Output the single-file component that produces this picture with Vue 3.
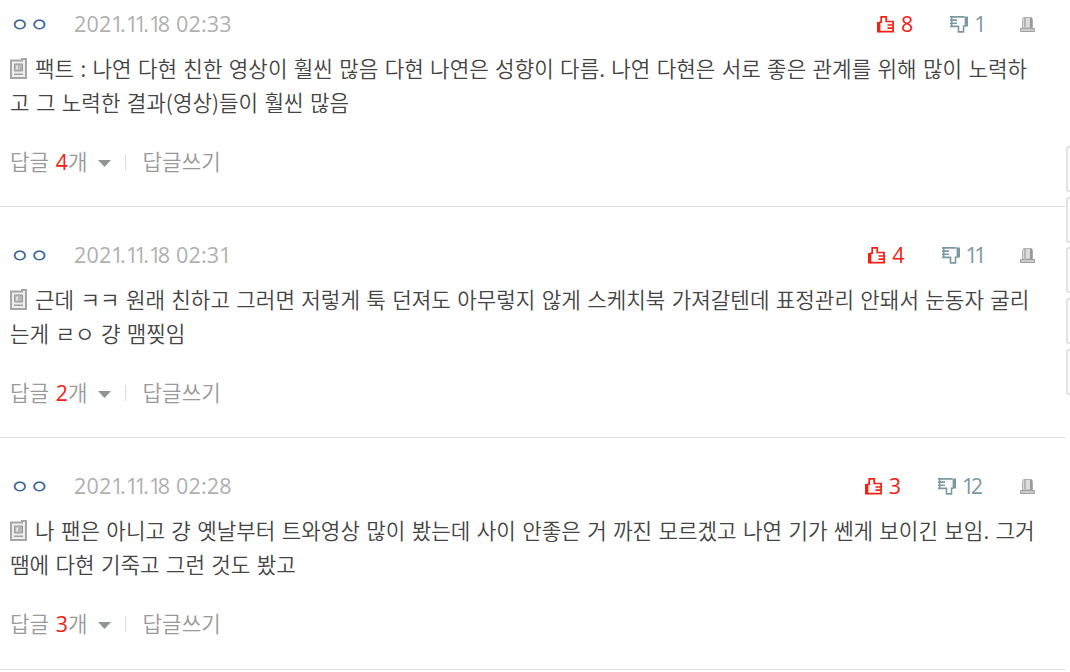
<script setup>
const comments = [
  {
    name: 'ㅇㅇ',
    date: '2021.11.18',
    time: '02:33',
    up: 8,
    down: 1,
    replies: 4,
    lines: [
      '팩트 : 나연 다현 친한 영상이 훨씬 많음 다현 나연은 성향이 다름. 나연 다현은 서로 좋은 관계를 위해 많이 노력하',
      '고 그 노력한 결과(영상)들이 훨씬 많음'
    ]
  },
  {
    name: 'ㅇㅇ',
    date: '2021.11.18',
    time: '02:31',
    up: 4,
    down: 11,
    replies: 2,
    lines: [
      '근데 ㅋㅋ 원래 친하고 그러면 저렇게 툭 던져도 아무렇지 않게 스케치북 가져갈텐데 표정관리 안돼서 눈동자 굴리',
      '는게 ㄹㅇ 걍 맴찢임'
    ]
  },
  {
    name: 'ㅇㅇ',
    date: '2021.11.18',
    time: '02:28',
    up: 3,
    down: 12,
    replies: 3,
    lines: [
      '나 팬은 아니고 걍 옛날부터 트와영상 많이 봤는데 사이 안좋은 거 까진 모르겠고 나연 기가 쎈게 보이긴 보임. 그거',
      '땜에 다현 기죽고 그런 것도 봤고'
    ]
  }
]

// the digit 1 is set narrower than the others
const chars = (value) => String(value).split('')
</script>

<template>
  <div class="page">
    <ul class="comment-list">
      <li v-for="(item, index) in comments" :key="index" class="comment">
        <div class="comment-head">
          <span class="name">{{ item.name }}</span>
          <span class="date"><span v-for="(c, i) in chars(item.date + ' ' + item.time)" :key="i" :class="{ one: c === '1' }">{{ c }}</span></span>
          <div class="actions">
            <button class="vote up">
              <svg width="17" height="17" viewBox="0 0 17 17">
                <path fill="currentColor" d="M0 6h3.4v10.5H0z" />
                <path fill="none" stroke="currentColor" stroke-width="1.7" d="M2.5 6.2h1.7V.9h5v4.6h6.9v10.2H2.5M10.5 9H16M10.5 12.2H16" />
              </svg>
              <span class="count"><span v-for="(c, i) in chars(item.up)" :key="i" :class="{ one: c === '1' }">{{ c }}</span></span>
            </button>
            <button class="vote down">
              <svg width="18" height="17" viewBox="0 0 18 17">
                <path fill="currentColor" d="M14.6.5H18V10.5h-3.4z" />
                <path fill="none" stroke="currentColor" stroke-width="1.6" d="M14.5.9H1.7v9.5h6.8v5.5h5V10.3h2M0 .9h2M0 4.1h7M0 7.2h7M0 10.4h3" />
              </svg>
              <span class="count"><span v-for="(c, i) in chars(item.down)" :key="i" :class="{ one: c === '1' }">{{ c }}</span></span>
            </button>
            <button class="report">
              <svg width="15" height="15" viewBox="0 0 15 15">
                <path fill="#dcdcdc" stroke="#b0b0b0" d="M2.5 11V2.5l1-2h8l1 2V11z" />
                <path fill="#b4b4b4" d="M4 1h2v9H4z" />
                <path fill="#999" d="M10 1h2v10h-2z" />
                <path fill="#ccc" stroke="#a0a0a0" d="M.5 11.5h14v3H.5z" />
              </svg>
            </button>
          </div>
        </div>
        <p class="content">
          <span class="line">
            <svg class="mobile" width="17" height="21" viewBox="0 0 17 21">
              <path fill="#eee" stroke="#a6a6a6" stroke-width="2" d="M1 2.5h11V1h4v19H1z" />
              <path fill="#b8b8b8" stroke="#999" d="M4.5 6h8v7h-8z" />
              <path fill="#e2e2e2" d="M6 7.5h2v4H6z" />
              <path fill="#a0a0a0" d="M4 15.5h9v1.5H4z" />
            </svg>
            <span>{{ item.lines[0] }}</span>
          </span>
          <span class="line">{{ item.lines[1] }}</span>
        </p>
        <div class="comment-foot">
          <button class="replies">답글 <em>{{ item.replies }}</em>개</button>
          <svg class="arrow" width="13" height="8" viewBox="0 0 13 8">
            <path fill="#8f9494" d="M0 0h13L6.5 7z" />
          </svg>
          <i class="bar"></i>
          <button class="write">답글쓰기</button>
        </div>
      </li>
    </ul>
    <div class="side">
      <span v-for="n in 5" :key="n" class="side-item"></span>
    </div>
  </div>
</template>

<style>
body {
  margin: 0;
  overflow: hidden;
  background: #fff;
}
</style>

<style scoped>
.page {
  position: relative;
  width: 1070px;
  height: 672px;
  overflow: hidden;
  font-family: 'Noto Sans CJK KR', sans-serif;
  font-size: 21.25px;
  font-weight: 350;
  color: #444;
}

button {
  padding: 0;
  border: 0;
  background: none;
  font: inherit;
  color: inherit;
}

svg {
  display: block;
  flex: none;
}

.comment-list {
  width: 1065px;
  margin: 0;
  padding: 0;
  list-style: none;
}

.comment {
  box-sizing: border-box;
  height: 231px;
  padding: 33px 0 0 10px;
  border-bottom: 1px solid #dcdcdc;
}

.comment:first-child {
  height: 207px;
  padding-top: 9px;
}

.comment:last-child {
  height: 232px;
}

.comment-head {
  display: flex;
  align-items: center;
  height: 30px;
}

.name {
  width: 64px;
  padding-bottom: 2px;
  color: #3a639a;
  font-weight: 400;
  transform: scaleY(0.92);
}

.date,
.count {
  padding-bottom: 2px;
  font-family: 'Open Sans', sans-serif;
  font-size: 21.5px;
  font-weight: 400;
  white-space: nowrap;
}

.date {
  color: #b0b0b0;
  letter-spacing: 0.15px;
}

.one {
  letter-spacing: -3.6px;
}

.actions {
  display: flex;
  align-items: center;
  margin-left: auto;
  padding-right: 30px;
}

.vote {
  display: flex;
  align-items: center;
  gap: 7px;
  margin-right: 37px;
}

.up {
  color: #f32013;
}

.down {
  gap: 6px;
  color: #7d98a5;
}

.content {
  margin: 11px 0 0;
}

.line {
  display: flex;
  align-items: center;
  height: 34px;
  word-spacing: 1.6px;
  white-space: nowrap;
}

.mobile {
  margin: 3px 8px 0 0;
}

.comment-foot {
  display: flex;
  align-items: center;
  height: 30px;
  margin-top: 27px;
  color: #999;
}

.replies {
  word-spacing: 2px;
}

.replies em {
  font-family: 'Open Sans', sans-serif;
  font-style: normal;
  font-weight: 400;
  color: #f32013;
}

.arrow {
  margin: 7px 0 0 10px;
}

.bar {
  width: 1px;
  height: 16px;
  margin: 3px 17px 0 14px;
  background: #dcdcdc;
}

.side {
  position: absolute;
  top: 146px;
  left: 1066px;
  display: flex;
  flex-direction: column;
  gap: 4.7px;
}

.side-item {
  box-sizing: border-box;
  width: 46px;
  height: 46px;
  border: 2px solid #e2e2e2;
  border-radius: 3px;
  background: #fff;
}
</style>
